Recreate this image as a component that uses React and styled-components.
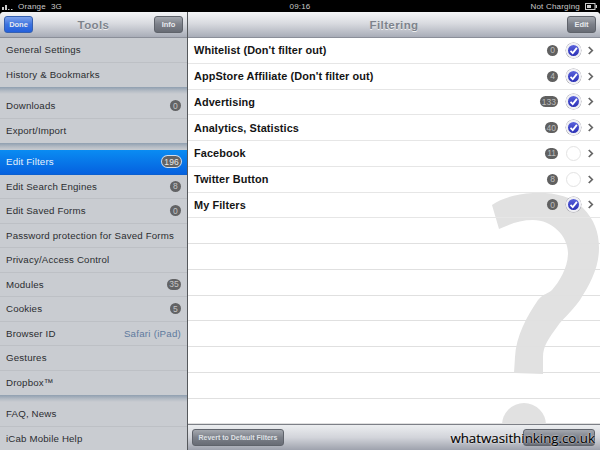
import React from "react";
import styled, { createGlobalStyle } from "styled-components";

const sidebarGroups = [
  [{ label: "General Settings" }, { label: "History & Bookmarks" }],
  [{ label: "Downloads", count: 0 }, { label: "Export/Import" }],
  [
    { label: "Edit Filters", count: 196, active: true },
    { label: "Edit Search Engines", count: 8 },
    { label: "Edit Saved Forms", count: 0 },
    { label: "Password protection for Saved Forms" },
    { label: "Privacy/Access Control" },
    { label: "Modules", count: 35 },
    { label: "Cookies", count: 5 },
    { label: "Browser ID", value: "Safari (iPad)" },
    { label: "Gestures" },
    { label: "Dropbox™" },
  ],
  [{ label: "FAQ, News" }, { label: "iCab Mobile Help" }],
];

const filters = [
  { name: "Whitelist (Don't filter out)", count: 0, on: true },
  { name: "AppStore Affiliate (Don't filter out)", count: 4, on: true },
  { name: "Advertising", count: 133, on: true },
  { name: "Analytics, Statistics", count: 40, on: true },
  { name: "Facebook", count: 11, on: false },
  { name: "Twitter Button", count: 8, on: false },
  { name: "My Filters", count: 0, on: true },
];

const EMPTY_ROWS = 8;

const App = () => {
  return (
    <>
      <GlobalStyle />
      <Screen>
        <StatusBar>
          <StatusSide>
            <SignalBars viewBox="0 0 11 8">
              <rect x="0" y="5" width="2" height="3" />
              <rect x="3" y="3" width="2" height="5" />
              <rect x="6" y="7" width="1.5" height="1" />
              <rect x="9" y="7" width="1.5" height="1" />
            </SignalBars>
            <span>Orange</span>
            <span>3G</span>
          </StatusSide>
          <Clock>09:16</Clock>
          <StatusSide $right>
            <span>Not Charging</span>
            <Battery viewBox="0 0 12 7">
              <rect x="0.5" y="0.5" width="9.5" height="6" fill="none" stroke="#ccc" />
              <rect x="2" y="2" width="4" height="3" fill="#ccc" />
              <rect x="10.5" y="2" width="1.5" height="3" fill="#ccc" />
            </Battery>
          </StatusSide>
        </StatusBar>

        <Panels>
          <Sidebar>
            <NavBar>
              <BarButton $blue>Done</BarButton>
              <NavTitle>Tools</NavTitle>
              <BarButton>Info</BarButton>
            </NavBar>
            {sidebarGroups.map((group, i) => (
              <SideGroup key={i}>
                {group.map((item) => (
                  <SideRow key={item.label} $active={item.active}>
                    <span>{item.label}</span>
                    {item.count !== undefined && (
                      <SideCount $active={item.active}>{item.count}</SideCount>
                    )}
                    {item.value && <SideValue>{item.value}</SideValue>}
                  </SideRow>
                ))}
              </SideGroup>
            ))}
          </Sidebar>

          <Main>
            <NavBar>
              <Spacer />
              <NavTitle>Filtering</NavTitle>
              <BarButton>Edit</BarButton>
            </NavBar>
            <ListArea>
              <BigQuestion viewBox="0 0 120 260">
                <path d="M12 19 C22 12 36 8 53 7 C72 6 92 10 103 22 C114 33 119 46 119 62 C119 82 110 98 100 114 C90 128 83 132 77 141 C69 152 63 160 63 171 L63 188 L34 187 L35 171 C36 150 47 130 58 114 C64 107 68 108 72 104 C79 96 88 82 88 67 C88 50 72 34 53 34 C40 34 30 38 19 43 Z" />
                <circle cx="44" cy="239" r="22" />
              </BigQuestion>
              {filters.map((f) => (
                <FilterRow key={f.name}>
                  <FilterName>{f.name}</FilterName>
                  <FilterCount>{f.count}</FilterCount>
                  <Check $on={f.on}>
                    {f.on && (
                      <svg viewBox="0 0 12 12" width="9" height="9">
                        <path d="M2 6.5 L5 9.5 L10.5 2.5" fill="none" stroke="#fff" strokeWidth="2.4" />
                      </svg>
                    )}
                  </Check>
                  <Chevron viewBox="0 0 8 10">
                    <path d="M2 1 L6 5 L2 9" fill="none" stroke="#666" strokeWidth="2" />
                  </Chevron>
                </FilterRow>
              ))}
              {Array.from({ length: EMPTY_ROWS }).map((_, i) => (
                <EmptyRow key={i} />
              ))}
            </ListArea>
            <Footer>
              <FooterButton>Revert to Default Filters</FooterButton>
              <FooterButton $small />
            </Footer>
            <Watermark>whatwasithinking.co.uk</Watermark>
          </Main>
        </Panels>
      </Screen>
    </>
  );
};

export default App;

const GlobalStyle = createGlobalStyle`
  html, body {
    margin: 0;
    padding: 0;
    background: #000;
  }
`;

const Screen = styled.div`
  width: 600px;
  height: 450px;
  overflow: hidden;
  display: flex;
  flex-direction: column;
  font-family: "Liberation Sans", Arial, sans-serif;
  background: #000;
`;

const StatusBar = styled.div`
  height: 12px;
  flex: none;
  display: grid;
  grid-template-columns: 1fr auto 1fr;
  align-items: center;
  padding: 0 2px;
  color: #c9c9c9;
  font-size: 8px;
  background: #000;
`;

const StatusSide = styled.div`
  display: flex;
  align-items: center;
  gap: 5px;
  letter-spacing: 0.2px;
  justify-content: ${(p) => (p.$right ? "flex-end" : "flex-start")};
`;

const Clock = styled.div`
  text-align: center;
  letter-spacing: 0.2px;
`;

const SignalBars = styled.svg`
  width: 11px;
  height: 8px;
  fill: #ccc;
`;

const Battery = styled.svg`
  width: 12px;
  height: 7px;
  margin-right: 1px;
`;

const Panels = styled.div`
  flex: 1;
  display: flex;
  min-height: 0;
  border-radius: 4px 4px 0 0;
  overflow: hidden;
`;

const Sidebar = styled.div`
  width: 188px;
  box-sizing: border-box;
  flex: none;
  display: flex;
  flex-direction: column;
  background: #c9ccd1;
  border-right: 1px solid #55585c;
`;

const NavBar = styled.div`
  height: 26px;
  flex: none;
  display: flex;
  align-items: center;
  justify-content: space-between;
  padding: 0 4px;
  background: linear-gradient(#f4f5f7, #d9dbe0 45%, #a9adb8);
  border-bottom: 1px solid #8b8f99;
  box-sizing: border-box;
`;

const NavTitle = styled.div`
  font-size: 11.5px;
  font-weight: 700;
  color: #7d838c;
  letter-spacing: 0.4px;
  text-shadow: 0 1px 0 #eee;
`;

const Spacer = styled.div`
  width: 29px;
`;

const BarButton = styled.div`
  width: 29px;
  height: 17px;
  display: flex;
  align-items: center;
  justify-content: center;
  border-radius: 3px;
  font-size: 7.5px;
  font-weight: 700;
  color: #e8eaee;
  border: 1px solid ${(p) => (p.$blue ? "#3560b0" : "#5f636b")};
  box-sizing: border-box;
  background: ${(p) =>
    p.$blue
      ? "linear-gradient(#7da2ea, #3d73e0 50%, #2360dc)"
      : "linear-gradient(#a4a8af, #7c8089 50%, #686c75)"};
`;

const SideGroup = styled.div`
  display: flex;
  flex-direction: column;
  & + & {
    padding-top: 7px;
    background: linear-gradient(#8f9fb0, #b5bcc5 4px, #c9ccd1 7px);
    background-size: 100% 7px;
    background-repeat: no-repeat;
  }
`;

const SideRow = styled.div`
  height: 24.5px;
  flex: none;
  box-sizing: border-box;
  display: flex;
  align-items: center;
  justify-content: space-between;
  padding: 0 6px;
  font-size: 9.7px;
  letter-spacing: 0.17px;
  color: ${(p) => (p.$active ? "#e6f0fb" : "#2b2d30")};
  border-bottom: 1px solid ${(p) => (p.$active ? "#0a5fd0" : "#bdc0c5")};
  background: ${(p) =>
    p.$active ? "linear-gradient(#0a8cf2, #0561df)" : "#c9ccd1"};
  &:last-child {
    border-bottom: none;
  }
`;

const SideCount = styled.span`
  min-width: 7px;
  height: 11px;
  padding: 0 2px;
  border-radius: 6px;
  display: inline-flex;
  align-items: center;
  justify-content: center;
  font-size: 8.5px;
  color: ${(p) => (p.$active ? "#e8e8e8" : "#c6c6c6")};
  background: #626365;
  box-shadow: ${(p) => (p.$active ? "0 0 0 1px #d5dde8" : "none")};
`;

const SideValue = styled.span`
  color: #5e7a9e;
  font-size: 9.7px;
  letter-spacing: 0.25px;
`;

const Main = styled.div`
  flex: 1;
  min-width: 0;
  display: flex;
  flex-direction: column;
  position: relative;
  background: #fff;
`;

const ListArea = styled.div`
  flex: 1;
  min-height: 0;
  position: relative;
  overflow: hidden;
  background: #fff;
`;

const BigQuestion = styled.svg`
  position: absolute;
  left: 292px;
  top: 148px;
  width: 120px;
  height: 260px;
  fill: #e1e1e1;
`;

const FilterRow = styled.div`
  height: 25.75px;
  box-sizing: border-box;
  display: flex;
  align-items: center;
  position: relative;
  padding: 0 6px;
  border-bottom: 1px solid #e6e6e6;
`;

const EmptyRow = styled.div`
  height: 25.75px;
  box-sizing: border-box;
  position: relative;
  border-bottom: 1px solid #e0e0e0;
`;

const FilterName = styled.div`
  flex: 1;
  font-size: 10.9px;
  font-weight: 700;
  letter-spacing: 0.1px;
  color: #141414;
`;

const FilterCount = styled.span`
  min-width: 7px;
  height: 11px;
  padding: 0 2px;
  border-radius: 6px;
  display: inline-flex;
  align-items: center;
  justify-content: center;
  font-size: 8.5px;
  color: #bcbcbc;
  background: #606060;
`;

const Check = styled.span`
  width: 15px;
  height: 15px;
  margin: 0 6px 0 8px;
  border-radius: 50%;
  box-sizing: border-box;
  display: inline-flex;
  align-items: center;
  justify-content: center;
  background: ${(p) =>
    p.$on ? "linear-gradient(#5a62dc, #2a2fb5)" : "#fff"};
  border: ${(p) => (p.$on ? "2px solid #f0f0f5" : "1px solid #e3e3e3")};
  box-shadow: ${(p) => (p.$on ? "0 0 0 0.5px #a5a5ad" : "none")};
`;

const Chevron = styled.svg`
  width: 7px;
  height: 9px;
  flex: none;
`;

const Footer = styled.div`
  height: 26px;
  flex: none;
  box-sizing: border-box;
  display: flex;
  align-items: center;
  justify-content: space-between;
  padding: 0 5px 0 4px;
  border-top: 1px solid #7d8087;
  background: linear-gradient(#eceef0, #d2d4da 50%, #9ea2ad);
`;

const FooterButton = styled.div`
  width: ${(p) => (p.$small ? "72px" : "92px")};
  height: 17px;
  display: flex;
  align-items: center;
  justify-content: center;
  border-radius: 3px;
  font-size: 7px;
  font-weight: 700;
  color: #dfe1e5;
  border: 1px solid #5f636b;
  box-sizing: border-box;
  background: linear-gradient(#a4a8af, #7c8089 50%, #686c75);
`;

const Watermark = styled.div`
  position: absolute;
  right: 5px;
  bottom: 2px;
  font-family: "Open Sans", "DejaVu Sans", sans-serif;
  font-size: 13.3px;
  font-weight: 500;
  line-height: 20px;
  color: #000;
  -webkit-text-stroke: 0.2px #000;
  text-shadow: 0 0 2px #fff, 0 0 1px #fff;
`;
